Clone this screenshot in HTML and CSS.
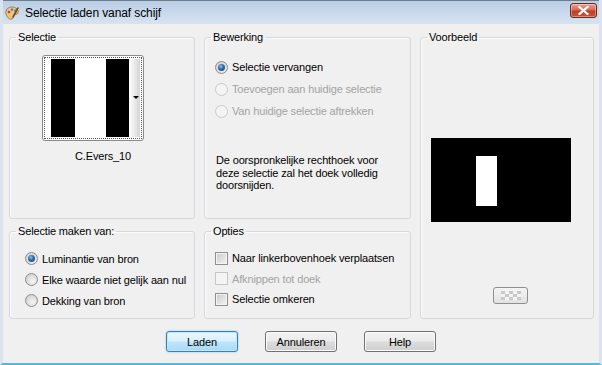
FILE: index.html
```html
<!DOCTYPE html>
<html lang="nl">
<head>
<meta charset="utf-8">
<title>Selectie laden vanaf schijf</title>
<link rel="stylesheet" href="styles.css">
</head>
<body>
<div class="window">
  <div class="titlebar">
    <svg class="app-icon" width="16" height="16" viewBox="0 0 16 16">
      <path d="M2 9 C1 5 4 2 8 2 C12 2 15 5 14 8 C13 10 11 9 10 10 C9 11 10 13 8 14 C5 15 3 12 2 9 Z" fill="#e9c48c" stroke="#9a6a3a" stroke-width="0.8"/>
      <circle cx="5" cy="7" r="1.3" fill="#d23a2a"/>
      <circle cx="8" cy="4.6" r="1.2" fill="#2e7bd6"/>
      <circle cx="11.3" cy="5.8" r="1.2" fill="#3aa845"/>
      <circle cx="5.5" cy="10.8" r="1.2" fill="#f0d020"/>
      <path d="M9 12 L14 3" stroke="#7a4a20" stroke-width="1.6" stroke-linecap="round"/>
    </svg>
    <span class="title">Selectie laden vanaf schijf</span>
    <button class="close" type="button" aria-label="Sluiten">
      <svg width="11" height="9" viewBox="0 0 11 9"><path d="M1.5 1 L9.5 8 M9.5 1 L1.5 8" stroke="#fff" stroke-width="2.2" stroke-linecap="square"/></svg>
    </button>
  </div>
  <div class="client">
    <div class="groups">
      <fieldset class="group g-selectie">
        <legend>Selectie</legend>
        <div class="thumb">
          <div class="thumb-focus">
            <span class="bar black w24"></span>
            <span class="bar white w31"></span>
            <span class="bar black w23"></span>
            <span class="strip"><span class="arrow"></span></span>
          </div>
        </div>
        <div class="thumb-name">C.Evers_10</div>
      </fieldset>

      <fieldset class="group g-bewerking">
        <legend>Bewerking</legend>
        <div class="options first">
          <div class="opt"><span class="radio checked"></span><span>Selectie vervangen</span></div>
          <div class="opt disabled"><span class="radio"></span><span>Toevoegen aan huidige selectie</span></div>
          <div class="opt disabled"><span class="radio"></span><span>Van huidige selectie aftrekken</span></div>
        </div>
        <p class="note">De oorspronkelijke rechthoek voor deze selectie zal het doek volledig doorsnijden.</p>
      </fieldset>

      <fieldset class="group g-voorbeeld">
        <legend>Voorbeeld</legend>
        <div class="preview"><span class="preview-sel"></span></div>
        <button class="mini" type="button" aria-label="Achtergrond">
          <svg width="20" height="9" viewBox="0 0 20 9">
            <rect width="20" height="9" fill="#f4f4f4"/>
            <rect x="0" y="0" width="4" height="3" fill="#c9c9c9"/>
            <rect x="8" y="0" width="4" height="3" fill="#c9c9c9"/>
            <rect x="16" y="0" width="4" height="3" fill="#c9c9c9"/>
            <rect x="4" y="3" width="4" height="3" fill="#c9c9c9"/>
            <rect x="12" y="3" width="4" height="3" fill="#c9c9c9"/>
            <rect x="0" y="6" width="4" height="3" fill="#c9c9c9"/>
            <rect x="8" y="6" width="4" height="3" fill="#c9c9c9"/>
            <rect x="16" y="6" width="4" height="3" fill="#c9c9c9"/>
          </svg>
        </button>
      </fieldset>

      <fieldset class="group g-maken">
        <legend>Selectie maken van:</legend>
        <div class="options second">
          <div class="opt"><span class="radio checked"></span><span>Luminantie van bron</span></div>
          <div class="opt"><span class="radio"></span><span>Elke waarde niet gelijk aan nul</span></div>
          <div class="opt"><span class="radio"></span><span>Dekking van bron</span></div>
        </div>
      </fieldset>

      <fieldset class="group g-opties">
        <legend>Opties</legend>
        <div class="options second">
          <div class="opt"><span class="check"></span><span>Naar linkerbovenhoek verplaatsen</span></div>
          <div class="opt disabled"><span class="check"></span><span>Afknippen tot doek</span></div>
          <div class="opt"><span class="check"></span><span>Selectie omkeren</span></div>
        </div>
      </fieldset>
    </div>
    <div class="buttons">
      <button class="btn default" type="button">Laden</button>
      <button class="btn" type="button">Annuleren</button>
      <button class="btn" type="button">Help</button>
    </div>
  </div>
</div>
</body>
</html>
```

FILE: styles.css
```css
html, body {
  margin: 0;
  padding: 0;
  background: #f0f0f0;
}

body {
  font-family: "Liberation Sans", Arial, sans-serif;
  font-size: 11px;
  letter-spacing: -0.15px;
  color: #000;
}

.window {
  width: 602px;
  height: 365px;
  box-sizing: border-box;
  background: #f0f0f0;
  border-left: 3px solid #dbe4ee;
  border-right: 3px solid #dbe4ee;
  border-bottom: 2px solid #55b8e0;
  display: flex;
  flex-direction: column;
  overflow: hidden;
}

.titlebar {
  height: 24px;
  margin: 0 -3px;
  box-sizing: border-box;
  border-top: 1px solid #707f90;
  background: linear-gradient(#b9cde4 0%, #c7d8eb 45%, #d7e3f1 100%);
  display: flex;
  align-items: center;
  padding: 0 5px 0 4px;
  flex: none;
}

.app-icon {
  flex: none;
  margin-top: 1px;
}

.title {
  margin-left: 5px;
  font-size: 12px;
  letter-spacing: -0.1px;
  color: #000;
  flex: 1;
}

.close {
  width: 27px;
  height: 15px;
  margin-top: -5px;
  padding: 0;
  border: 1px solid #6f2a20;
  border-radius: 3px;
  background: linear-gradient(#e8a595 0%, #d46a55 45%, #bf3d25 55%, #c9553c 100%);
  display: flex;
  align-items: center;
  justify-content: center;
  box-shadow: inset 0 0 0 1px rgba(255, 255, 255, 0.35);
}

.client {
  padding: 7px 0 0 6px;
  flex: 1;
  display: flex;
  flex-direction: column;
}

.groups {
  display: grid;
  grid-template-columns: 186px 207px 174px;
  grid-template-rows: 188px 94px;
  column-gap: 9px;
  row-gap: 6px;
}

.group {
  margin: 0;
  padding: 0 10px;
  border: 1px solid #d5d9dd;
  border-radius: 3px;
  box-shadow: inset 1px 1px 0 #fbfbfb;
  min-width: 0;
  box-sizing: border-box;
}

.group legend {
  padding: 0 2px;
  margin-left: -4px;
  line-height: 13px;
  font-size: 11px;
}

.g-selectie { grid-column: 1; grid-row: 1; }
.g-bewerking { grid-column: 2; grid-row: 1; }
.g-voorbeeld { grid-column: 3; grid-row: 1 / span 2; }
.g-maken { grid-column: 1; grid-row: 2; }
.g-opties { grid-column: 2; grid-row: 2; }

/* Selectie thumbnail */
.thumb {
  width: 102px;
  height: 86px;
  box-sizing: border-box;
  margin: 11px 0 0 22px;
  border: 1px solid #8a8a8a;
  border-radius: 3px;
  background: #fff;
  padding: 1px;
}

.thumb-focus {
  height: 100%;
  box-sizing: border-box;
  border: 1px dotted #555;
  padding: 1px 1px 1px 6px;
  display: flex;
}

.bar { display: block; height: 100%; }
.black { background: #000; }
.white { background: #fff; }
.w24 { width: 24px; }
.w31 { width: 31px; }
.w23 { width: 23px; }

.strip {
  flex: 1;
  position: relative;
  background: linear-gradient(90deg, #ffffff 0%, #eeeeee 40%, #d4d4d4 100%);
}

.arrow {
  position: absolute;
  right: 1px;
  top: 37px;
  width: 0;
  height: 0;
  border-left: 3px solid transparent;
  border-right: 3px solid transparent;
  border-top: 3px solid #000;
}

.thumb-name {
  margin-top: 9px;
  text-align: center;
  line-height: 13px;
  padding-left: 2px;
}

/* Options */
.options.first { padding-top: 12px; }
.options.second { padding-top: 9px; }

.opt {
  height: 22px;
  display: flex;
  align-items: center;
  gap: 4px;
  white-space: nowrap;
}

.g-maken .opt { height: 21px; }
.g-maken .options { padding-left: 5px; padding-top: 10px; }
.g-opties .opt { height: 20.5px; }
.g-opties .options { padding-top: 10px; }

.opt.disabled { color: #a3a3a3; }

.radio {
  width: 13px;
  height: 13px;
  box-sizing: border-box;
  border-radius: 50%;
  border: 1px solid #8a8d91;
  background: radial-gradient(circle at 60% 65%, #f6f6f6 0%, #dcdcdc 55%, #c9c9c9 100%);
  position: relative;
  flex: none;
}

.radio.checked::after {
  content: "";
  position: absolute;
  left: 2px;
  top: 2px;
  width: 7px;
  height: 7px;
  border-radius: 50%;
  background: radial-gradient(circle at 40% 35%, #8fc4ea 0%, #2d6aa3 45%, #173f66 100%);
}

.disabled .radio {
  border-color: #c8cacc;
  background: #f4f4f4;
}

.check {
  width: 13px;
  height: 13px;
  box-sizing: border-box;
  border: 1px solid #8e8f8f;
  background: linear-gradient(135deg, #c9c9c9 0%, #e4e4e4 60%, #f2f2f2 100%);
  box-shadow: inset 0 0 0 1px #f4f4f4;
  flex: none;
}

.disabled .check {
  border-color: #c6c6c6;
  background: #f4f4f4;
  box-shadow: none;
}

.note {
  margin: 32px 0 0 1px;
  line-height: 12.5px;
  width: 170px;
}

/* Voorbeeld */
.preview {
  width: 140px;
  height: 84px;
  margin: 94px 0 0 0;
  background: #000;
  position: relative;
}

.preview-sel {
  position: absolute;
  left: 45px;
  top: 18px;
  width: 21px;
  height: 50px;
  background: #fff;
}

.mini {
  display: flex;
  align-items: center;
  justify-content: center;
  width: 35px;
  height: 17px;
  margin: 65px 0 0 62px;
  padding: 0;
  border: 1px solid #8f8f8f;
  border-radius: 3px;
  background: linear-gradient(#f4f4f4, #e2e2e2);
}

/* Buttons */
.buttons {
  display: flex;
  justify-content: center;
  gap: 27px;
  margin-top: 12px;
  margin-left: -6px;
}

.btn {
  width: 72px;
  height: 21px;
  padding: 0;
  font-family: "Liberation Sans", Arial, sans-serif;
  font-size: 11px;
  letter-spacing: -0.15px;
  color: #000;
  border: 1px solid #707070;
  border-radius: 3px;
  background: linear-gradient(#f2f2f2 0%, #ebebeb 48%, #dcdcdc 52%, #cfcfcf 100%);
  box-shadow: inset 0 0 0 1px #fbfbfb;
}

.btn.default {
  border-color: #3c7fb1;
  background: linear-gradient(#eaf6fd 0%, #d9f0fc 48%, #bee6fd 52%, #a7d9f5 100%);
  box-shadow: inset 0 0 0 1px #c3e6f9, 0 0 2px #7cc4ea;
}
```
